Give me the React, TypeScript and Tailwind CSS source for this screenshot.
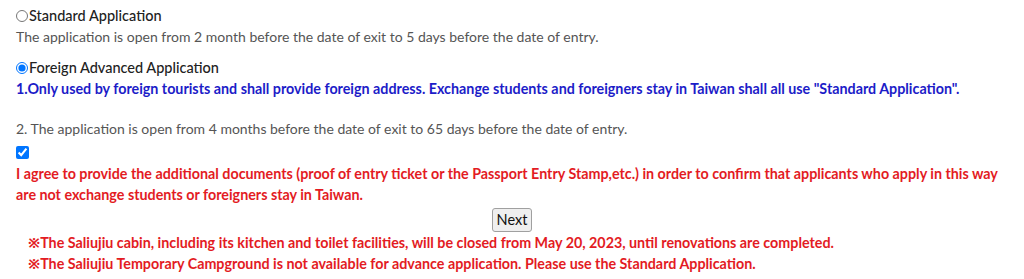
export default function App() {
  return (
    <div className="bg-white text-[14px] leading-[21px] text-[#333] px-4 pt-[5px]" style={{ fontFamily: 'Lato, "Noto Sans", sans-serif' }}>
      {/* Standard */}
      <label className="flex items-center text-[14.5px]">
        <input type="radio" name="apply" className="m-0 mr-[1px] w-[12px] h-[12px]" />
        <span className="font-medium text-[#222]">Standard Application</span>
      </label>
      <div className="text-[#555]">The application is open from 2 month before the date of exit to 5 days before the date of entry.</div>

      {/* Foreign */}
      <label className="flex items-center mt-[10px] text-[14.5px]">
        <input type="radio" name="apply" defaultChecked className="m-0 mr-[1px] w-[12px] h-[12px]" />
        <span className="font-medium text-[#222]">Foreign Advanced Application</span>
      </label>
      <div className="text-[#1c1cc8] font-bold text-[14.3px]">
        1.Only used by foreign tourists and shall provide foreign address. Exchange students and foreigners stay in Taiwan shall all use "Standard Application".
      </div>
      <div className="h-[19px]" />
      <div className="text-[#555]">2. The application is open from 4 months before the date of exit to 65 days before the date of entry.</div>
      <div className="mt-[3px] h-[21px] flex items-center">
        <input type="checkbox" defaultChecked className="m-0 w-[13px] h-[13px]" />
      </div>
      <div className="text-[#e31b23] font-bold text-[14.3px] pr-[10px]">
        I agree to provide the additional documents (proof of entry ticket or the Passport Entry Stamp,etc.) in order to confirm that applicants who apply in this way are not exchange students or foreigners stay in Taiwan.
      </div>

      <div className="flex justify-center mt-[3px]">
        <button className="px-[4px] h-[24px] leading-[20px] bg-[#efefef] border border-[#a0a0a0] rounded-[3px] text-[#111] text-[14.5px]">Next</button>
      </div>
      <div className="pl-[12px] text-[#e31b23] font-bold text-[14.3px]">
        <div>※The Saliujiu cabin, including its kitchen and toilet facilities, will be closed from May 20, 2023, until renovations are completed.</div>
        <div>※The Saliujiu Temporary Campground is not available for advance application. Please use the Standard Application.</div>
      </div>
    </div>
  )
}
